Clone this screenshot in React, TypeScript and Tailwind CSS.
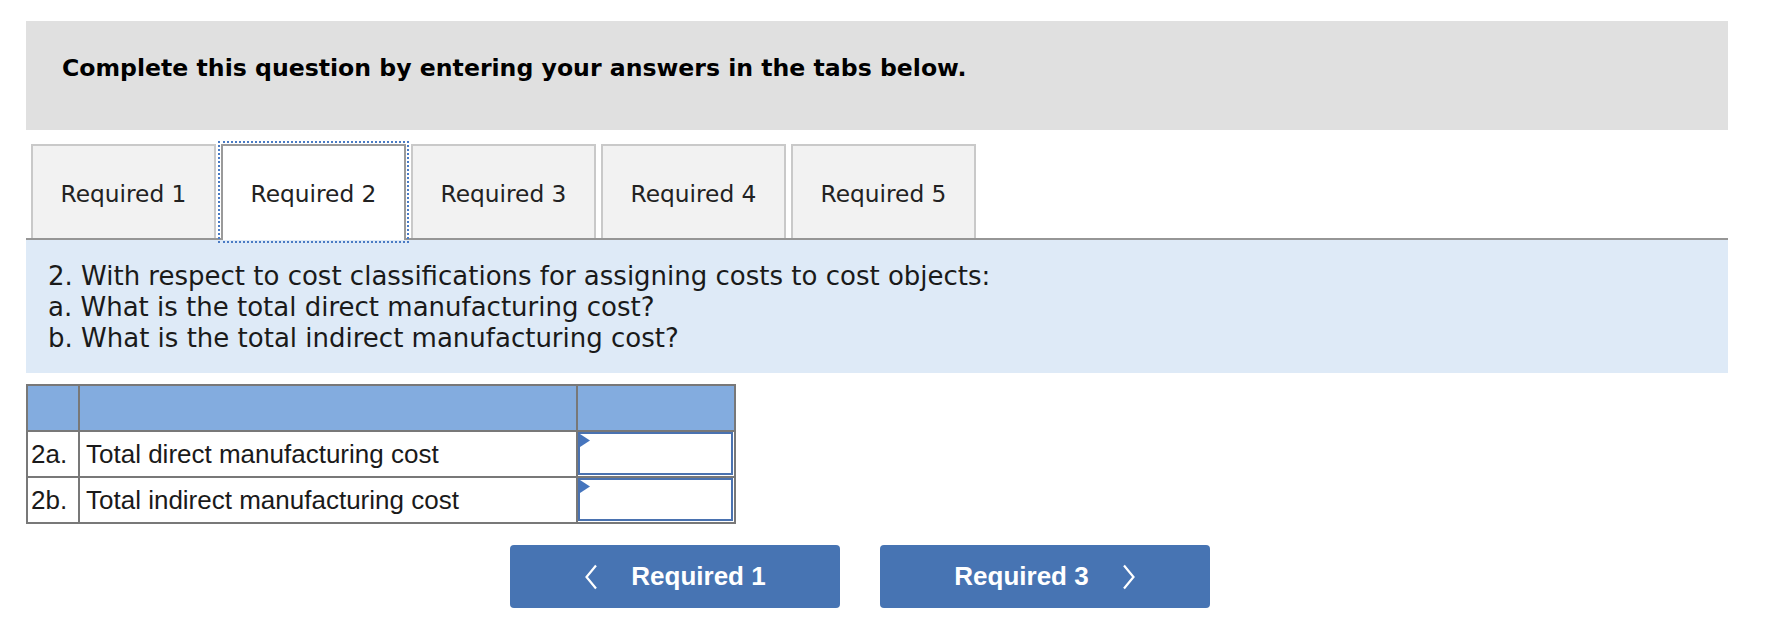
import React from "react";

const tabs = ["Required 1", "Required 2", "Required 3", "Required 4", "Required 5"];

function Marker() {
  return (
    <svg className="absolute left-0 top-0" width="10" height="13" viewBox="0 0 10 13">
      <polygon points="0,0 10,6.5 0,13" fill="#4675bd" />
    </svg>
  );
}

function ChevronLeft() {
  return (
    <svg width="14" height="26" viewBox="0 0 14 26" fill="none">
      <polyline points="12,1.5 2.5,13 12,24.5" stroke="white" strokeWidth="2.2" strokeLinejoin="miter" />
    </svg>
  );
}

function ChevronRight() {
  return (
    <svg width="14" height="26" viewBox="0 0 14 26" fill="none">
      <polyline points="2,1.5 11.5,13 2,24.5" stroke="white" strokeWidth="2.2" strokeLinejoin="miter" />
    </svg>
  );
}

export default function App() {
  return (
    <div className="w-[1772px] h-[642px] bg-white font-['DejaVu_Sans',sans-serif] overflow-hidden">
      <div className="ml-[26px] w-[1702px] pt-[21px]">
        <div className="h-[109px] bg-[#e0e0e0] pl-[36px] pt-[33px]">
          <p className="text-[23.6px] font-bold text-black leading-[29px]">
            Complete this question by entering your answers in the tabs below.
          </p>
        </div>

        <div className="mt-[14px] flex items-start gap-[5px] pl-[5px] h-[94px]">
          {tabs.map((t, i) =>
            i === 1 ? (
              <div
                key={t}
                className="relative z-10 w-[185px] h-[96px] bg-white border-2 border-b-0 border-[#9a9a9a] outline-2 outline-dotted outline-[#4a7bc4] outline-offset-1 flex items-center justify-center pt-[2px] text-[23.3px] text-[#222]"
              >
                {t}
              </div>
            ) : (
              <div
                key={t}
                className="w-[185px] h-[94px] bg-[#f2f2f2] border-2 border-b-0 border-[#c9c9c9] flex items-center justify-center pt-[4px] text-[23.3px] text-[#222]"
              >
                {t}
              </div>
            )
          )}
        </div>
        <div className="h-[2px] bg-[#969696]" />

        <div className="bg-[#deeaf7] pt-[21px] pb-[19px] pl-[22px] text-[26px] leading-[31px] text-[#1a1a1a]">
          <p>2. With respect to cost classifications for assigning costs to cost objects:</p>
          <p>a. What is the total direct manufacturing cost?</p>
          <p>b. What is the total indirect manufacturing cost?</p>
        </div>

        <div className="mt-[11px] w-[710px] border-2 border-[#787878] font-['Liberation_Sans',Arial,sans-serif] text-[26px] text-[#1a1a1a]">
          <div className="flex h-[44px] bg-[#83acdf]">
            <div className="w-[52px] border-r-2 border-[#787878]" />
            <div className="w-[498px] border-r-2 border-[#787878]" />
            <div className="flex-1" />
          </div>
          {[
            ["2a.", "Total direct manufacturing cost"],
            ["2b.", "Total indirect manufacturing cost"],
          ].map(([k, label]) => (
            <div key={k} className="flex h-[46px] border-t-2 border-[#787878] bg-white">
              <div className="w-[52px] border-r-2 border-[#787878] pl-[3px] flex items-center leading-none">{k}</div>
              <div className="w-[498px] border-r-2 border-[#787878] pl-[6px] flex items-center leading-none">{label}</div>
              <div className="flex-1 pr-[1px] pb-[1px]">
                <div className="relative h-full border-2 border-[#4a72b0] bg-white">
                  <Marker />
                </div>
              </div>
            </div>
          ))}
        </div>

        <div className="mt-[21px] ml-[484px] flex gap-[40px] font-['Liberation_Sans',Arial,sans-serif] font-bold text-[26px] text-white">
          <button className="w-[330px] h-[63px] rounded-[4px] bg-[#4774b3] flex items-center justify-center gap-[33px]">
            <ChevronLeft />
            <span>Required 1</span>
          </button>
          <button className="w-[330px] h-[63px] rounded-[4px] bg-[#4774b3] flex items-center justify-center gap-[33px]">
            <span>Required 3</span>
            <ChevronRight />
          </button>
        </div>
      </div>
    </div>
  );
}
